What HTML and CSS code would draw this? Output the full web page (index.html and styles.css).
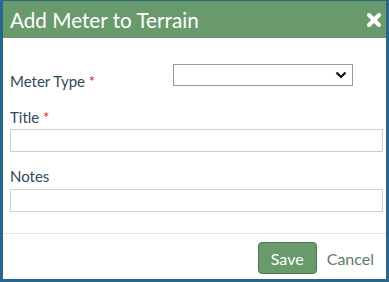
FILE: index.html
```html
<!DOCTYPE html>
<html>
<head>
    <meta charset="UTF-8">
    <meta name="viewport" content="width=device-width, initial-scale=1.0">
    <title>Add Meter to Terrain</title>
    <link rel="stylesheet" href="styles.css">
</head>
<body>
    <div class="dialog">
        <div class="dialog-header">
            <span class="dialog-title">Add Meter to Terrain</span>
            <span class="close">
                <svg width="16" height="16" viewBox="0 0 16 16">
                    <path d="M3 3 L13 13 M13 3 L3 13" stroke="#fff" stroke-width="4" stroke-linecap="round"/>
                </svg>
            </span>
        </div>

        <div class="dialog-body">
            <div class="row">
                <label class="label-inline">Meter Type <span class="req">*</span></label>
                <div class="select">
                    <svg width="12" height="8" viewBox="0 0 12 8">
                        <path d="M1.5 1.5 L6 6 L10.5 1.5" stroke="#111" stroke-width="2.2" fill="none"/>
                    </svg>
                </div>
            </div>

            <label class="label title-label">Title <span class="req">*</span></label>
            <input type="text" class="text-input">

            <label class="label notes-label">Notes</label>
            <input type="text" class="text-input">
        </div>

        <div class="dialog-footer">
            <button class="btn-save">Save</button>
            <button class="btn-cancel">Cancel</button>
        </div>
    </div>
</body>
</html>
```

FILE: styles.css
```css
body {
    margin: 0;
    padding: 0;
    font-family: Lato, "Open Sans", sans-serif;
    background-color: #fff;
}

.dialog {
    width: 389px;
    height: 282px;
    box-sizing: border-box;
    border: 3px solid #27678e;
    border-top-width: 1px;
    display: flex;
    flex-direction: column;
    background-color: #fff;
}

.dialog-header {
    height: 37px;
    background-color: #699a6c;
    display: flex;
    align-items: center;
    justify-content: space-between;
    padding: 0 4px 0 7px;
}

.dialog-title {
    color: #fff;
    font-size: 20.7px;
}

.close {
    display: flex;
    width: 16px;
    height: 16px;
}

.dialog-body {
    padding: 0 3px 21px 7px;
    display: flex;
    flex-direction: column;
}

.row {
    display: flex;
    align-items: flex-start;
    margin-top: 26px;
}

.label,
.label-inline {
    font-size: 15px;
    line-height: 18px;
    color: #2f4a5a;
}

.label-inline {
    width: 163px;
    margin-top: 8px;
}

.req {
    color: #e02020;
}

.select {
    width: 180px;
    height: 22px;
    box-sizing: border-box;
    border: 1px solid #9a9a9a;
    display: flex;
    align-items: center;
    justify-content: flex-end;
    padding-right: 5px;
}

.title-label {
    margin-top: 18px;
}

.notes-label {
    margin-top: 15px;
}

.text-input {
    display: block;
    height: 23px;
    box-sizing: border-box;
    border: 1px solid #cfcfcf;
    margin: 3px 0 0 0;
    padding: 0;
}

.notes-label + .text-input {
    margin-top: 4px;
}

.dialog-footer {
    border-top: 1px solid #e3e3e3;
    flex: 1;
    display: flex;
    justify-content: flex-end;
    align-items: flex-start;
    padding: 8px 12px 0 0;
}

.btn-save {
    width: 59px;
    height: 32px;
    background-color: #699a6c;
    border: 1px solid #4e7552;
    border-radius: 4px;
    color: #fff;
    font-family: inherit;
    font-size: 16px;
    padding: 0;
}

.btn-cancel {
    background: none;
    border: none;
    height: 32px;
    margin-left: 10px;
    padding: 0;
    color: #5d7c6c;
    font-family: inherit;
    font-size: 16px;
}
```
